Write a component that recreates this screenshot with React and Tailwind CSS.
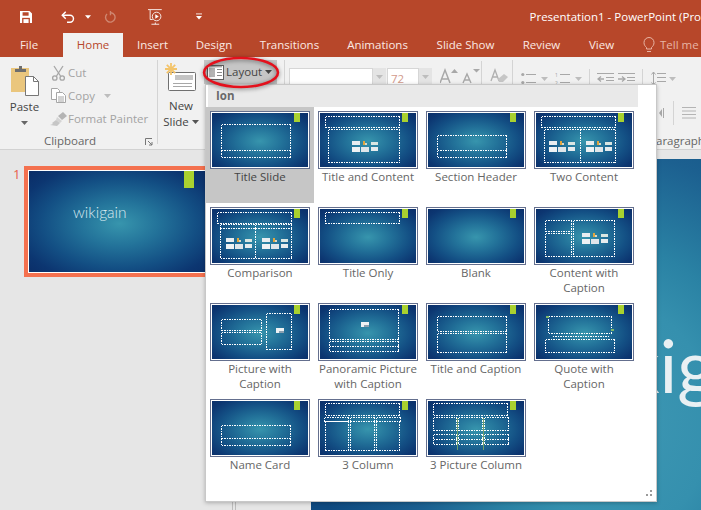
import React from "react";

const THUMB_BG =
  "bg-[radial-gradient(ellipse_at_50%_52%,#3795ad_0%,#23739a_30%,#134f84_60%,#0c3671_82%,#0a2c66_100%)]";

// placeholders are measured on a 100x58 thumb
const layouts = [
  { name: "Title Slide", selected: true, rects: [[11.5, 13.5, 69, 26], [11.5, 39.5, 69, 7]] },
  { name: "Title and Content", rects: [[7.5, 5.5, 74, 11], [10.5, 18.5, 71, 33]], icons: [[34, 30]] },
  { name: "Section Header", rects: [[11.5, 24.5, 69, 15], [11.5, 39.5, 69, 7]] },
  { name: "Two Content", rects: [[7.5, 5.5, 74, 11], [10.5, 18.5, 36, 33], [46.5, 18.5, 35, 33]], icons: [[15, 30], [52, 30]] },
  { name: "Comparison", rects: [[7.5, 5.5, 74, 11], [10.5, 17.5, 35, 4], [45.5, 17.5, 36, 4], [10.5, 21.5, 35, 30], [45.5, 21.5, 36, 30]], icons: [[16, 31], [52, 31]] },
  { name: "Title Only", rects: [[7.5, 5.5, 74, 11]] },
  { name: "Blank", rects: [] },
  { name: "Content with\nCaption", rects: [[11.5, 13.5, 26, 11], [11.5, 26.5, 26, 23], [39.5, 13.5, 41, 36]], icons: [[48, 26]] },
  { name: "Picture with\nCaption", rects: [[11.5, 16.5, 40, 11], [11.5, 29.5, 40, 12], [56.5, 10.5, 25, 36]], pics: [[66, 25]] },
  { name: "Panoramic Picture\nwith Caption", rects: [[11.5, 6.5, 69, 30], [11.5, 38.5, 69, 5], [11.5, 43.5, 69, 5]], pics: [[43, 19]] },
  { name: "Title and Caption", rects: [[11.5, 13.5, 69, 15], [11.5, 30.5, 69, 19]] },
  { name: "Quote with\nCaption", rects: [[14.5, 13.5, 63, 17], [18.5, 33.5, 56, 0], [11.5, 36.5, 69, 13]], marks: [[12, 13], [77, 26]] },
  { name: "Name Card", rects: [[11.5, 26.5, 69, 13], [11.5, 39.5, 69, 7]] },
  { name: "3 Column", rects: [[7.5, 4.5, 74, 12], [6.5, 18.5, 24, 4], [32.5, 18.5, 24, 4], [58.5, 18.5, 24, 4], [7.5, 22.5, 23, 29], [32.5, 22.5, 24, 29], [58.5, 22.5, 23, 29]] },
  { name: "3 Picture Column", lines: [31.5, 57.5], rects: [[7.5, 4.5, 74, 12], [7.5, 18.5, 23, 13], [32.5, 18.5, 24, 13], [58.5, 18.5, 24, 13], [7.5, 35.5, 23, 5], [32.5, 35.5, 24, 5], [58.5, 35.5, 24, 5], [7.5, 40.5, 23, 5], [32.5, 40.5, 24, 5], [58.5, 40.5, 24, 5]] },
];

function ContentIcons({ x, y }) {
  return (
    <g transform={`translate(${x} ${y})`}>
      <rect x="0" y="0" width="8" height="4" fill="#e8edf0" />
      <rect x="11" y="0" width="2" height="4" fill="#e2a53c" />
      <rect x="13" y="2" width="2" height="2" fill="#d8d8c8" />
      <rect x="19" y="1" width="7" height="3" fill="#d9e6e2" />
      <rect x="0" y="6" width="8" height="5" fill="#eef2f4" />
      <rect x="9" y="6" width="8" height="5" fill="#dfe6ea" />
      <rect x="19" y="6" width="7" height="4" fill="#e6ecee" />
    </g>
  );
}

function Thumb({ layout }) {
  return (
    <div className={`relative w-[100px] h-[58px] shrink-0 ${THUMB_BG} shadow-[inset_0_0_0_1px_#646f8e,inset_0_0_0_2px_#ffffff]`}>
      <svg width="100" height="58" viewBox="0 0 100 58" className="block">
        <rect x="84" y="2" width="6" height="9" fill="#a9d12f" />
        {(layout.lines || []).map((x) => (
          <line key={x} x1={x} x2={x} y1="19" y2="51" stroke="#6f9f6a" strokeWidth="1" />
        ))}
        {layout.rects.map((r, i) => (
          // edges all run the same way so shared edges keep their dots
          <path
            key={i}
            d={`M${r[0]} ${r[1]}h${r[2]}M${r[0]} ${r[1] + r[3]}h${r[2]}M${r[0]} ${r[1]}v${r[3]}M${r[0] + r[2]} ${r[1]}v${r[3]}`}
            fill="none"
            stroke="#ffffff"
            strokeWidth="1"
            strokeDasharray="1.5 1"
            shapeRendering="crispEdges"
          />
        ))}
        {(layout.icons || []).map((p, i) => <ContentIcons key={i} x={p[0]} y={p[1]} />)}
        {(layout.pics || []).map((p, i) => (
          <g key={i}>
            <rect x={p[0]} y={p[1]} width="8" height="5" fill="#eef2f4" />
            <rect x={p[0] + 3} y={p[1] + 3} width="5" height="2" fill="#8aa0b0" />
          </g>
        ))}
        {(layout.marks || []).map((p, i) => (
          <rect key={i} x={p[0]} y={p[1]} width="3" height="2" fill="#7fb86a" />
        ))}
      </svg>
    </div>
  );
}

function LayoutCell({ layout }) {
  return (
    <div className={`w-[108px] h-[96px] flex flex-col items-center pt-[4px] ${layout.selected ? "bg-[#c6c6c6]" : ""}`}>
      <Thumb layout={layout} />
      <div className={`text-[11.5px] leading-[15px] text-center whitespace-pre-line ${layout.selected ? "text-[#444444]" : "text-[#666666]"}`}>
        {layout.name}
      </div>
    </div>
  );
}

function Caret({ className = "" }) {
  return (
    <svg width="7" height="4" viewBox="0 0 7 4" className={className}>
      <path d="M0 0h7L3.5 4z" fill="currentColor" />
    </svg>
  );
}

function Tab({ w, active, children }) {
  return (
    <div className={`h-full flex items-center justify-center shrink-0 ${w} ${active ? "bg-[#f1f1f1] text-[#b7472a]" : "text-[#fbe9e3]"}`}>
      {children}
    </div>
  );
}

function PasteIcon() {
  return (
    <svg width="30" height="32" viewBox="0 0 30 32">
      <rect x="1" y="4" width="18" height="24" fill="#eac67d" />
      <path d="M5 8V5h4V2h3v3h4v3z" fill="#6e6e6e" />
      <path d="M15.5 12.5h8l5 5v14h-13z" fill="#ffffff" stroke="#777777" />
      <path d="M23.5 12.5v5h5" fill="none" stroke="#777777" />
    </svg>
  );
}

function ScissorsIcon() {
  return (
    <svg width="15" height="16" viewBox="0 0 15 16" fill="none" stroke="#a6a6a6" strokeWidth="1.3">
      <path d="M3 1l6.5 10M12 1L5.500 11" />
      <circle cx="3.800" cy="13" r="2.200" />
      <circle cx="11.200" cy="13" r="2.200" />
    </svg>
  );
}

function CopyIcon() {
  return (
    <svg width="15" height="15" viewBox="0 0 15 15" fill="#ffffff" stroke="#a6a6a6">
      <path d="M.5.500h6l2 2v9h-8z" />
      <path d="M5.500 4.500h6l3 3v7h-9z" />
      <path d="M7 9h6M7 11h6M7 13h6" />
    </svg>
  );
}

function PainterIcon() {
  return (
    <svg width="17" height="14" viewBox="0 0 17 14">
      <path d="M8 4l5-4 4 4-5 4z" fill="#b4b4b4" />
      <path d="M7 5l5 4-2 2-4-3z" fill="#d4d4d4" />
      <path d="M6 8l4 3-3 3-7-1 3-1-1-1z" fill="#c6c6c6" />
    </svg>
  );
}

function NewSlideIcon() {
  return (
    <svg width="32" height="29" viewBox="0 0 32 29">
      <rect x="3.500" y="9.500" width="27" height="18" rx="1" fill="#ffffff" stroke="#707070" />
      <rect x="10" y="12" width="18" height="5" fill="#c4c4c4" />
      <path d="M8 20.500h19M8 23.500h19" stroke="#a8a8a8" />
      <path d="M6 0v12M0 6h12M1.800 1.800l8.400 8.400M10.200 1.800l-8.400 8.400" stroke="#f3c46b" strokeWidth="1.800" />
    </svg>
  );
}

function LayoutIcon() {
  return (
    <svg width="17" height="15" viewBox="0 0 17 15">
      <rect x=".5" y=".5" width="16" height="14" fill="#ffffff" stroke="#5f5f5f" />
      <rect x="2" y="3" width="6" height="9" fill="#b4b4b4" />
      <path d="M2 1.800h13M10 4.500h5M10 7.500h5M10 10.500h5" stroke="#8a8a8a" />
    </svg>
  );
}

function GrowFont({ down }) {
  return (
    <svg width="19" height="17" viewBox="0 0 19 17" fill="none" stroke="#a8a8a8">
      {down ? (
        <path d="M1 16l4-9 4 9M2.500 13h5" strokeWidth="1.400" />
      ) : (
        <path d="M0 16l5-13 5 13M2 12h6" strokeWidth="1.500" />
      )}
      <path d={down ? "M11 2h7l-3.500 3.500z" : "M11 6l3.500-4 3.500 4z"} fill="#a8a8a8" stroke="none" />
    </svg>
  );
}

function ClearFont() {
  return (
    <svg width="18" height="16" viewBox="0 0 18 16">
      <path d="M1 13L5 2l4 11M2.500 9h5" fill="none" stroke="#b0b0b0" strokeWidth="1.300" />
      <path d="M8 11l6-5 4 3-5 5H9z" fill="#c6c6c6" />
    </svg>
  );
}

function ListIcon({ numbered }) {
  return (
    <svg width="15" height="14" viewBox="0 0 15 14" stroke="#a8a8a8">
      <path d="M5 2.500h10M5 10.500h10" />
      {numbered ? (
        <text x="0" y="5" fontSize="5" fill="#a0a0a0" stroke="none">1</text>
      ) : (
        <circle cx="1.800" cy="2.500" r="1.600" fill="#a8a8a8" stroke="none" />
      )}
      {numbered ? (
        <text x="0" y="13" fontSize="5" fill="#a0a0a0" stroke="none">2</text>
      ) : (
        <circle cx="1.800" cy="10.500" r="1.600" fill="#a8a8a8" stroke="none" />
      )}
    </svg>
  );
}

function IndentIcon({ right }) {
  return (
    <svg width="17" height="12" viewBox="0 0 17 12" stroke="#a8a8a8" fill="none">
      <path d="M0 .5h17M9 4.500h8M9 7.500h8M0 11.500h17" />
      <path d={right ? "M0 6h6M4 3.500L7 6 4 8.500" : "M1 6h6M4 3.500L1 6l3 2.500"} strokeWidth="1.300" />
    </svg>
  );
}

function AlignIcon() {
  return (
    <svg width="14" height="14" viewBox="0 0 14 14" stroke="#b4b4b4" fill="none">
      <path d="M0 1.500h14M0 5h14M0 8.500h14M0 12h14" />
    </svg>
  );
}

function RibbonSep({ className = "h-[24px]" }) {
  return <div className={`w-px bg-[#d4d4d4] shrink-0 ${className}`} />;
}

function SmallAction({ icon, label, caret, iconW = "w-[18px]" }) {
  return (
    <div className="h-[23px] flex items-center text-[#a3a3a3]">
      <div className={`${iconW} flex justify-center mr-[1px]`}>{icon}</div>
      <span className="whitespace-nowrap">{label}</span>
      {caret && <Caret className="ml-[9px] text-[#bdbdbd]" />}
    </div>
  );
}

function Ribbon() {
  return (
    <div className="h-[93px] bg-[#f1f1f1] border-b border-[#d2d2d2] flex shrink-0 text-[11.5px]">
      {/* Clipboard */}
      <div className="w-[157px] shrink-0 flex flex-col">
        <div className="h-[75px] flex">
          <div className="w-[49px] flex flex-col items-center pt-[7px] text-[#444444]">
            <PasteIcon />
            <div className="mt-[3px] leading-[16px]">Paste</div>
            <Caret className="mt-[6px] text-[#666666]" />
          </div>
          <div className="pt-[4px]">
            <SmallAction icon={<ScissorsIcon />} label="Cut" />
            <SmallAction icon={<CopyIcon />} label="Copy" caret />
            <SmallAction icon={<PainterIcon />} label="Format Painter" />
          </div>
        </div>
        <div className="relative h-[17px] flex items-center justify-center pr-[17px] text-[#666666]">
          Clipboard
          <svg width="8" height="8" viewBox="0 0 8 8" className="absolute right-[4px] top-[6px]" stroke="#777777" fill="none">
            <path d="M.5 7V.5H7M3 3l4 4M7 4v3H4" />
          </svg>
        </div>
      </div>
      <RibbonSep className="h-[84px] mt-[3px]" />

      {/* Slides */}
      <div className="w-[126px] shrink-0 flex">
        <div className="w-[46px] flex flex-col items-center pt-[6px] text-[#444444] leading-[16px]">
          <NewSlideIcon />
          <div className="mt-[6px]">New</div>
          <div className="flex items-center">Slide<Caret className="ml-[3px] text-[#555555]" /></div>
        </div>
        <div className="w-[73px] h-[24px] mt-[3px] bg-[#c6c6c6] flex items-center pl-[3px] text-[#444444]">
          <LayoutIcon />
          <span className="ml-[2px]">Layout</span>
          <Caret className="ml-[3px] text-[#444444]" />
        </div>
      </div>
      <RibbonSep className="h-[24px] mt-[3px]" />

      {/* Font */}
      <div className="w-[227px] shrink-0 flex items-start pt-[11px] pl-[4px]">
        <div className="w-[84px] h-[17px] bg-white border border-[#d6d6d6]" />
        <div className="w-[13px] h-[17px] bg-[#e4e4e4] flex items-center justify-center"><Caret className="text-[#bdbdbd]" /></div>
        <div className="w-[32px] h-[17px] ml-px bg-white border border-[#d6d6d6] pl-[3px] text-[#d29a8c] leading-[20px]">72</div>
        <div className="w-[13px] h-[17px] bg-[#e4e4e4] flex items-center justify-center"><Caret className="text-[#bdbdbd]" /></div>
        <div className="ml-[8px] -mt-[1px]"><GrowFont /></div>
        <div className="ml-[3px] -mt-[1px]"><GrowFont down /></div>
        <RibbonSep className="h-[24px] -mt-[7px]" />
        <div className="ml-[8px]"><ClearFont /></div>
      </div>
      <RibbonSep className="h-[84px] mt-[3px]" />

      {/* Paragraph */}
      <div className="w-[328px] shrink-0 flex flex-col">
        <div className="h-[36px] flex items-center pl-[8px] pt-[7px]">
          <ListIcon />
          <Caret className="ml-[5px] text-[#bdbdbd]" />
          <div className="ml-[7px]"><ListIcon numbered /></div>
          <Caret className="ml-[5px] text-[#bdbdbd]" />
          <RibbonSep className="h-[20px] ml-[7px]" />
          <div className="ml-[7px]"><IndentIcon /></div>
          <div className="ml-[4px]"><IndentIcon right /></div>
          <RibbonSep className="h-[20px] ml-[7px]" />
          <svg width="15" height="15" viewBox="0 0 15 15" className="ml-[8px]" stroke="#a8a8a8" fill="none">
            <path d="M6 2.500h9M6 6.500h9M6 10.500h9M2.500 1v13M.5 3.500l2-2.500 2 2.500M.5 11.500l2 2.500 2-2.500" />
          </svg>
          <Caret className="ml-[3px] text-[#bdbdbd]" />
        </div>
        <div className="h-[39px] flex items-center pl-[146px]">
          <svg width="5" height="10" viewBox="0 0 5 10"><path d="M4 0v10h1V0zM3 1v8L0 5z" fill="#a8a8a8" /></svg>
          <RibbonSep className="h-[24px] ml-[9px]" />
          <div className="ml-[8px]"><AlignIcon /></div>
        </div>
        <div className="h-[17px] flex items-center justify-center text-[#666666]">Paragraph</div>
      </div>
    </div>
  );
}

function LayoutGallery() {
  return (
    <div className="absolute left-[205px] top-[84px] w-[452px] h-[418px] bg-white border border-[#c8c8c8] shadow-[0_1px_4px_rgba(0,0,0,0.25)] text-[11.5px] overflow-hidden">
      <div className="ml-[2px] mr-[18px] h-[22px] bg-[#e9e9e9] pl-[8px] flex items-center font-bold text-[#6a6a6a]">Ion</div>
      <div className="w-[432px] grid grid-cols-4">
        {layouts.map((l) => <LayoutCell key={l.name} layout={l} />)}
      </div>
      <svg width="8" height="8" viewBox="0 0 8 8" className="absolute right-[3px] bottom-[3px]" fill="#9a9a9a">
        <rect x="5" y="0" width="2" height="2" />
        <rect x="1" y="4" width="2" height="2" />
        <rect x="5" y="4" width="2" height="2" />
      </svg>
    </div>
  );
}

export default function App() {
  return (
    <div className="relative w-[701px] h-[510px] overflow-hidden flex flex-col bg-[#e6e6e6] font-['Open_Sans',sans-serif]">
      {/* title bar */}
      <div className="h-[33px] bg-[#b7472a] flex items-center shrink-0 text-white">
        <svg width="14" height="14" viewBox="0 0 14 14" className="ml-[20px]">
          <path d="M0 0h11l3 3v11H0z" fill="#ffffff" />
          <rect x="3" y="1.500" width="7" height="4" fill="#b7472a" />
          <rect x="2.500" y="8" width="9" height="6" fill="#b7472a" />
          <rect x="4" y="9.500" width="6" height="4.500" fill="#ffffff" />
        </svg>
        <svg width="16" height="14" viewBox="0 0 16 14" className="ml-[29px]" fill="none" stroke="#ffffff" strokeWidth="1.700">
          <path d="M1.500 5h9a4 4 0 010 8H7" />
          <path d="M5.500 1l-4 4 4 4" />
        </svg>
        <Caret className="ml-[10px] text-white" />
        <svg width="14" height="14" viewBox="0 0 14 14" className="ml-[13px]" fill="none" stroke="#cf8771" strokeWidth="1.600">
          <path d="M8 2a5.500 5.500 0 11-4.500 1.500" />
          <path d="M7.500 0v5" />
        </svg>
        <svg width="17" height="19" viewBox="0 0 17 19" className="ml-[32px]" fill="none" stroke="#ffffff">
          <path d="M0 1.500h16M2.500 2v11h3M8.500 18.500v-2M4 18.500h9" />
          <circle cx="10" cy="9.500" r="5" />
          <path d="M8.500 7v5l4-2.500z" fill="#ffffff" stroke="none" />
        </svg>
        <svg width="7" height="7" viewBox="0 0 7 7" className="ml-[33px]" fill="#ffffff">
          <rect x="0" y="0" width="7" height="1" />
          <path d="M0 3h7L3.500 7z" />
        </svg>
        <div className="ml-[328px] text-[11.5px] whitespace-nowrap">Presentation1 - PowerPoint (Pro</div>
      </div>

      {/* tabs */}
      <div className="h-[24px] bg-[#b7472a] flex shrink-0 text-[11.5px]">
        <Tab w="w-[58px] mr-[5px]">File</Tab>
        <Tab w="w-[60px]" active>Home</Tab>
        <Tab w="w-[59px]">Insert</Tab>
        <Tab w="w-[64px]">Design</Tab>
        <Tab w="w-[87px]">Transitions</Tab>
        <Tab w="w-[89px]">Animations</Tab>
        <Tab w="w-[87px]">Slide Show</Tab>
        <Tab w="w-[65px]">Review</Tab>
        <Tab w="w-[55px]">View</Tab>
        <div className="flex items-center ml-[14px] text-[#e8b5a5] whitespace-nowrap">
          <svg width="12" height="16" viewBox="0 0 12 16" fill="none" stroke="#e8b5a5" className="mr-[5px]">
            <path d="M3.500 10.500C2 9 1 8 1 5.500a5 5 0 0110 0c0 2.500-1 3.500-2.500 5v1.500h-5zM4 14.500h4" />
          </svg>
          Tell me
        </div>
      </div>

      <Ribbon />

      {/* body */}
      <div className="flex-1 flex min-h-0">
        <div className="w-[233px] shrink-0 border-r border-[#bcbcbc] flex items-start pt-[16px]">
          <div className="w-[24px] pl-[13px] text-[13px] leading-[16px] text-[#e8604c]">1</div>
          <div className="w-[191px] h-[111px] shrink-0 border-[4px] border-[#f4714f]">
            <div className="h-full border border-white">
              <div className={`relative h-full ${THUMB_BG} pl-[44px] pt-[32px]`}>
                <svg width="10" height="17" viewBox="0 0 10 17" className="absolute right-[16px] top-0">
                  <rect width="10" height="17" fill="#a9d12f" />
                </svg>
                <div className="font-['Lato',sans-serif] font-light text-[15.500px] leading-[18px] text-[#d8eaef]">wikigain</div>
              </div>
            </div>
          </div>
        </div>
        <div className="w-[76px] shrink-0 ml-[2px] border-l border-[#bcbcbc]" />
        <div className="flex-1 mt-[9px] overflow-hidden bg-[radial-gradient(ellipse_300px_380px_at_310px_261px,#3d97b3_0%,#3590ae_30%,#2a82a4_45%,#1c6090_70%,#0f4a80_100%)] pl-[235px] pt-[161px]">
          <div className="font-['Lato',sans-serif] font-normal text-[74px] leading-[90px] text-[#e9f0f3] whitespace-nowrap">wikigain</div>
        </div>
      </div>

      <LayoutGallery />

      {/* hand drawn highlight round the Layout button */}
      <svg width="84" height="36" viewBox="0 0 84 36" className="absolute left-[199px] top-[55px] drop-shadow-[0_1px_2px_rgba(0,0,0,0.5)]" fill="none">
        <ellipse cx="42" cy="17.500" rx="37" ry="14.500" stroke="#e4101c" strokeWidth="2.500" />
      </svg>
    </div>
  );
}
